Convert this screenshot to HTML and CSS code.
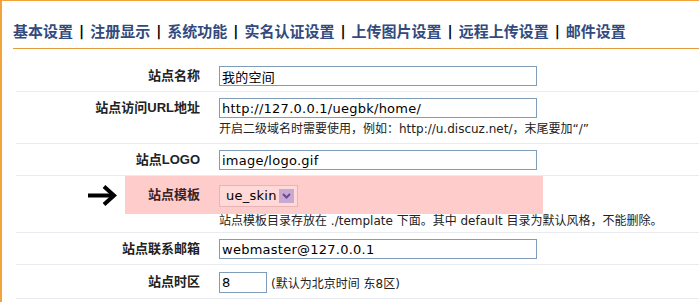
FILE: index.html
```html
<!DOCTYPE html>
<html lang="zh-CN">
<head>
<meta charset="utf-8">
<title>基本设置</title>
<link rel="stylesheet" href="styles.css">
</head>
<body>
<div class="frame">
  <nav class="tabs">
    <a class="tab">基本设置</a><span class="sep">|</span>
    <a class="tab">注册显示</a><span class="sep">|</span>
    <a class="tab">系统功能</a><span class="sep">|</span>
    <a class="tab">实名认证设置</a><span class="sep">|</span>
    <a class="tab">上传图片设置</a><span class="sep">|</span>
    <a class="tab">远程上传设置</a><span class="sep">|</span>
    <a class="tab">邮件设置</a>
  </nav>
  <div class="list">
    <div class="row">
      <div class="label">站点名称</div>
      <div class="field"><input class="text wide" type="text" value="我的空间"></div>
    </div>
    <div class="row row-help">
      <div class="label">站点访问URL地址</div>
      <div class="field">
        <input class="text wide" type="text" value="http://127.0.0.1/uegbk/home/">
        <div class="help">开启二级域名时需要使用，例如：http://u.discuz.net/，末尾要加“/”</div>
      </div>
    </div>
    <div class="row">
      <div class="label">站点LOGO</div>
      <div class="field"><input class="text wide" type="text" value="image/logo.gif"></div>
    </div>
    <div class="row-hl">
      <div class="hl-line">
        <span class="arrow">
          <svg width="30" height="21" viewBox="0 0 30 21"><path d="M1 10.5 H25" stroke="#000" stroke-width="4" fill="none"/><path d="M17 1.5 L27 10.5 L17 19.5" stroke="#000" stroke-width="4" fill="none" stroke-linejoin="miter"/></svg>
        </span>
        <div class="hl">
          <div class="label">站点模板</div>
          <div class="field">
            <span class="select"><span class="select-text">ue_skin</span><span class="select-btn"><svg width="9" height="6" viewBox="0 0 9 6"><path d="M1 1 L4.5 4.5 L8 1" stroke="#6d4a93" stroke-width="2" fill="none"/></svg></span></span>
          </div>
        </div>
      </div>
      <div class="help help-indent">站点模板目录存放在 ./template 下面。其中 default 目录为默认风格，不能删除。</div>
    </div>
    <div class="row">
      <div class="label">站点联系邮箱</div>
      <div class="field"><input class="text wide" type="text" value="webmaster@127.0.0.1"></div>
    </div>
    <div class="row row-last">
      <div class="label">站点时区</div>
      <div class="field inline"><input class="text small" type="text" value="8"><span class="note">(默认为北京时间 东8区)</span></div>
    </div>
  </div>
</div>
</body>
</html>
```
FILE: styles.css
```css
html, body {
  margin: 0;
  padding: 0;
  background: #fff;
}
body {
  width: 699px;
  height: 303px;
  overflow: hidden;
  font-family: "DejaVu Sans", "Noto Sans CJK SC", sans-serif;
  font-size: 12px;
  color: #222;
}
.frame {
  border-top: 1px solid #f0a43a;
  border-left: 2px solid #f0a43a;
  height: 302px;
  box-sizing: border-box;
}
.tabs {
  margin: 20px 0 0 11px;
  padding-bottom: 7px;
  border-bottom: 1px solid #e49b3c;
  display: flex;
  align-items: center;
  gap: 6px;
  height: 20px;
}
.tab {
  font-family: "Noto Sans CJK SC", sans-serif;
  font-weight: bold;
  font-size: 15px;
  line-height: 20px;
  color: #334a7d;
  text-decoration: none;
}
.sep {
  font-family: "DejaVu Sans", sans-serif;
  font-weight: bold;
  font-size: 14px;
  line-height: 20px;
  color: #000;
}
.list {
  margin-left: 14px;
  padding-top: 11px;
}
.row {
  display: grid;
  grid-template-columns: 184px 1fr;
  column-gap: 19px;
  padding: 6px 0 5px;
  border-bottom: 1px solid #e8ebef;
}
.row-help {
  padding-bottom: 5px;
}
.row-last {
  padding-top: 7px;
}
.label {
  font-family: "Liberation Sans", "Noto Sans CJK SC", sans-serif;
  font-weight: bold;
  font-size: 13px;
  line-height: 20px;
  text-align: right;
  color: #222;
}
.field {
  display: flex;
  flex-direction: column;
  align-items: flex-start;
}
.field.inline {
  flex-direction: row;
  align-items: center;
}
.text {
  box-sizing: border-box;
  height: 20px;
  border: 1px solid #7f9db9;
  padding: 0 2px;
  margin: 0;
  font-family: "DejaVu Sans", "Noto Sans CJK SC", sans-serif;
  font-size: 13px;
  letter-spacing: 0.25px;
  color: #000;
  background: #fff;
}
.wide {
  width: 318px;
}
.small {
  width: 48px;
  height: 21px;
}
.help {
  font-size: 12px;
  line-height: 18px;
  color: #222;
  white-space: nowrap;
  padding-top: 2px;
}
.note {
  margin-left: 4px;
  font-size: 12px;
  color: #222;
}
.row-hl {
  border-bottom: 1px solid #e8ebef;
  padding-bottom: 3px;
}
.hl-line {
  display: flex;
  height: 38px;
}
.arrow {
  width: 109px;
  box-sizing: border-box;
  padding-right: 8px;
  display: flex;
  justify-content: flex-end;
  align-items: center;
  padding-top: 1px;
}
.arrow svg {
  display: block;
}
.hl {
  width: 418px;
  background: #ffcccc;
  display: grid;
  grid-template-columns: 75px 1fr;
  column-gap: 19px;
  align-items: center;
}
.hl .label {
  color: #3a2222;
}
.select {
  box-sizing: border-box;
  display: inline-flex;
  align-items: center;
  justify-content: space-between;
  width: 79px;
  height: 22px;
  border: 1px solid #ebb4b4;
  background: #ffd8d8;
  padding: 0 3px 0 6px;
  margin-top: 1px;
}
.select-text {
  font-size: 13px;
  letter-spacing: 0.25px;
  color: #000;
}
.select-btn {
  width: 15px;
  height: 14px;
  background: #c7a9d2;
  display: flex;
  align-items: center;
  justify-content: center;
}
.select-btn svg {
  display: block;
}
.help-indent {
  margin-left: 203px;
  line-height: 15px;
  padding-top: 0;
}
```
